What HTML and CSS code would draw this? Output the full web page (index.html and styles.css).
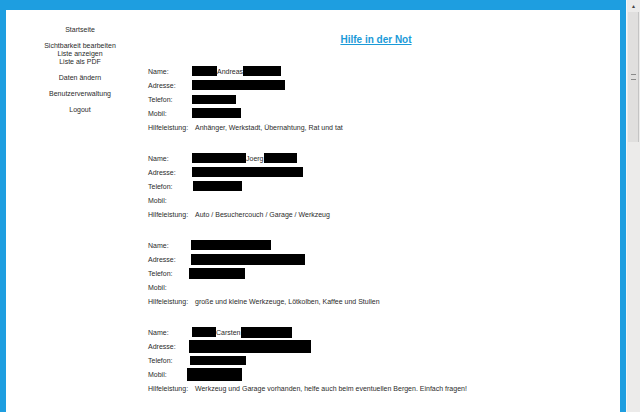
FILE: index.html
```html
<!DOCTYPE html>
<html lang="de">
<head>
    <meta charset="UTF-8">
    <title>Hilfe in der Not</title>
    <link rel="stylesheet" href="styles.css">
</head>
<body>

    <div class="frame">
        <!-- Navigation links -->
        <div class="nav">
            <a href="#">Startseite</a>
            <div class="nav-group">
                <a href="#">Sichtbarkeit bearbeiten</a>
                <a href="#">Liste anzeigen</a>
                <a href="#">Liste als PDF</a>
            </div>
            <a href="#">Daten ändern</a>
            <a href="#">Benutzerverwaltung</a>
            <a href="#">Logout</a>
        </div>

        <div class="main">
            <h1><a href="#">Hilfe in der Not</a></h1>

            <div class="entry">
                <div class="row"><span class="label">Name:</span><span class="value"><span class="redact" style="width:25px"></span>Andreas<span class="redact" style="width:38px"></span></span></div>
                <div class="row"><span class="label">Adresse:</span><span class="value"><span class="redact" style="width:93px"></span></span></div>
                <div class="row"><span class="label">Telefon:</span><span class="value"><span class="redact short" style="width:44px"></span></span></div>
                <div class="row"><span class="label">Mobil:</span><span class="value"><span class="redact" style="width:49px"></span></span></div>
                <div class="row"><span class="label">Hilfeleistung:</span><span class="value text">Anhänger, Werkstadt, Übernahtung, Rat und tat</span></div>
            </div>

            <div class="entry">
                <div class="row"><span class="label">Name:</span><span class="value"><span class="redact" style="width:54px"></span>Joerg <span class="redact" style="width:33px"></span></span></div>
                <div class="row"><span class="label">Adresse:</span><span class="value"><span class="redact" style="width:111px"></span></span></div>
                <div class="row"><span class="label">Telefon:</span><span class="value"><span class="redact" style="width:49px;margin-left:1px"></span></span></div>
                <div class="row"><span class="label">Mobil:</span><span class="value"></span></div>
                <div class="row"><span class="label">Hilfeleistung:</span><span class="value text">Auto / Besuchercouch / Garage / Werkzeug</span></div>
            </div>

            <div class="entry">
                <div class="row"><span class="label">Name:</span><span class="value"><span class="redact" style="width:80px;margin-left:-1px"></span></span></div>
                <div class="row"><span class="label">Adresse:</span><span class="value"><span class="redact tall" style="width:114px;margin-left:-1px"></span></span></div>
                <div class="row"><span class="label">Telefon:</span><span class="value"><span class="redact tall" style="width:56px;margin-left:-3px"></span></span></div>
                <div class="row"><span class="label">Mobil:</span><span class="value"></span></div>
                <div class="row"><span class="label">Hilfeleistung:</span><span class="value text">große und kleine Werkzeuge, Lötkolben, Kaffee und Stullen</span></div>
            </div>

            <div class="entry">
                <div class="row"><span class="label">Name:</span><span class="value"><span class="redact" style="width:24px"></span>Carsten<span class="redact tall" style="width:51px"></span></span></div>
                <div class="row"><span class="label">Adresse:</span><span class="value"><span class="redact taller" style="width:122px;margin-left:-3px"></span></span></div>
                <div class="row"><span class="label">Telefon:</span><span class="value"><span class="redact short" style="width:56px;margin-left:-2px"></span></span></div>
                <div class="row"><span class="label">Mobil:</span><span class="value"><span class="redact taller" style="width:55px;margin-left:-5px"></span></span></div>
                <div class="row"><span class="label">Hilfeleistung:</span><span class="value text">Werkzeug und Garage vorhanden, helfe auch beim eventuellen Bergen. Einfach fragen!</span></div>
            </div>
        </div>
    </div>

    <!-- fake window scrollbar -->
    <div class="scrollbar">
        <div class="arrow">&#9652;</div>
        <div class="thumb"><span class="grip"></span></div>
    </div>

</body>
</html>
```

FILE: styles.css
```css
/* Global Styles */
html, body {
    height: 100%;
    overflow: hidden;
}

body {
    margin: 0;
    display: flex;
    font-family: Arial, 'Liberation Sans', sans-serif;
    font-size: 7px;
    color: #2b2b2b;
    background: #ffffff;
}

.frame {
    flex: 1;
    display: flex;
    align-items: flex-start;
    border: 6px solid #1e9ee0;
    border-top-width: 10px;
    border-bottom: none;
    background: #ffffff;
}

/* Navigation */
.nav {
    width: 132px;
    padding: 16px 0 0 8px;
    display: flex;
    flex-direction: column;
    gap: 8px;
    text-align: center;
    line-height: 8px;
}

.nav a,
.nav-group a {
    color: #2b2b2b;
    text-decoration: none;
    display: block;
}

/* Main content */
.main {
    flex: 1;
    padding: 24px 0 0 2px;
}

h1 {
    margin: 0 16px 18px 0;
    font-size: 10px;
    line-height: 12px;
    text-align: center;
}

h1 a {
    color: #1a9ad8;
    text-decoration: underline;
}

.entry {
    margin-bottom: 17px;
}

.row {
    display: flex;
    align-items: center;
    height: 14px;
}

.label {
    width: 44px;
    flex-shrink: 0;
}

.value {
    display: flex;
    align-items: center;
    white-space: nowrap;
}

.value.text {
    padding-left: 3px;
}

.redact {
    display: inline-block;
    height: 10px;
    background: #000000;
}

.redact.short {
    height: 9px;
}

.redact.tall {
    height: 11px;
}

.redact.taller {
    height: 13px;
}

/* Scrollbar */
.scrollbar {
    width: 13px;
    flex-shrink: 0;
    background: #ecebea;
    border-left: 1px solid #f8f8f8;
    display: flex;
    flex-direction: column;
    align-items: center;
}

.arrow {
    height: 12px;
    font-size: 6px;
    line-height: 12px;
    color: #444;
}

.thumb {
    width: 10px;
    height: 130px;
    background: #e0dfde;
    border-right: 1px solid #c4c4c4;
    display: flex;
    align-items: center;
    justify-content: center;
}

.grip {
    width: 5px;
    height: 4px;
    border-top: 1px solid #8a8a8a;
    border-bottom: 1px solid #8a8a8a;
}
```
